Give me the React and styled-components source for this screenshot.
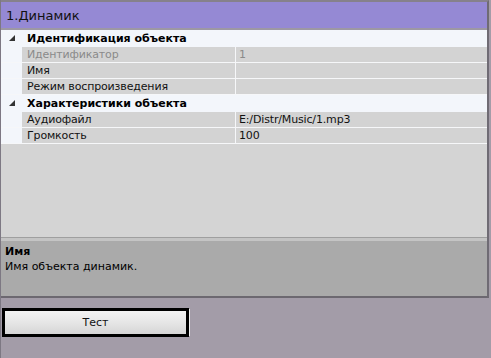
import React from 'react';
import styled, { createGlobalStyle } from 'styled-components';

const GlobalStyle = createGlobalStyle`
  html, body {
    margin: 0;
    padding: 0;
    background: #a39ca8;
    font-family: 'DejaVu Sans', Verdana, sans-serif;
  }
`;

const Page = styled.div`
  width: 491px;
  height: 358px;
  border-left: 1px solid #7d7883;
  box-sizing: border-box;
`;

const Panel = styled.div`
  width: 488px;
  height: 298px;
  box-sizing: border-box;
  border-top: 2px solid #86818b;
  border-right: 2px solid #6f6b74;
  border-bottom: 2px solid #6c6870;
  display: flex;
  flex-direction: column;
`;

const Header = styled.div`
  height: 26px;
  flex: none;
  background: #9589d4;
  border-bottom: 2px solid #9d98a4;
  display: flex;
  align-items: center;
  padding-left: 5px;
  font-size: 13px;
  color: #111;
`;

const Grid = styled.div`
  flex: 1;
  background: #d4d4d4;
  display: flex;
  flex-direction: column;
  font-size: 11px;
`;

const CategoryRow = styled.div`
  height: 16px;
  background: #f3f6fb;
  display: flex;
  align-items: center;
  font-weight: bold;
  color: #000;
  border-bottom: 1px solid #f3f6fb;
`;

const CategoryTitle = styled.span`
  padding-left: 5px;
`;

const Gutter = styled.div`
  width: 21px;
  flex: none;
  display: flex;
  justify-content: center;
  align-items: center;
  align-self: stretch;
  background: #f3f6fb;
`;

const Row = styled.div`
  height: 15px;
  display: flex;
  border-bottom: 1px solid #f6f7f9;
`;

const Cell = styled.div`
  background: #d3d3d3;
  display: flex;
  align-items: center;
  padding-left: 5px;
  color: ${(p) => (p.$muted ? '#8a8a8a' : '#111')};
  box-sizing: border-box;
  letter-spacing: -0.15px;
`;

const NameCell = styled(Cell)`
  width: 214px;
  flex: none;
  border-right: 1px solid #f6f7f9;
`;

const ValueCell = styled(Cell)`
  flex: 1;
  padding-left: 3px;
`;

const Splitter = styled.div`
  height: 4px;
  flex: none;
  border-top: 1px solid #9f9f9f;
  background: #c4c4c4;
  box-sizing: border-box;
`;

const Description = styled.div`
  height: 55px;
  flex: none;
  box-sizing: border-box;
  background: #aaaaaa;
  padding: 3px 4px;
  font-size: 11px;
  color: #000;
  line-height: 15px;
`;

const DescTitle = styled.div`
  font-weight: bold;
`;

const ButtonArea = styled.div`
  padding: 10px 0 0 1px;
`;

const TestButton = styled.button`
  width: 187px;
  height: 29px;
  border: 3px solid #000;
  background: linear-gradient(#f3f3f3, #e6e6e6 50%, #d6d6d6);
  font-family: 'DejaVu Sans', Verdana, sans-serif;
  font-size: 11px;
  color: #111;
  padding: 0;
  box-shadow: 2px 0 0 -1px #f0f0f0;
`;

const Arrow = () => (
  <svg width="6" height="6" viewBox="0 0 6 6">
    <polygon points="6,0 6,6 0,6" fill="#333" />
  </svg>
);

const groups = [
  {
    title: 'Идентификация объекта',
    rows: [
      { name: 'Идентификатор', value: '1', muted: true },
      { name: 'Имя', value: '' },
      { name: 'Режим воспроизведения', value: '' },
    ],
  },
  {
    title: 'Характеристики объекта',
    rows: [
      { name: 'Аудиофайл', value: 'E:/Distr/Music/1.mp3' },
      { name: 'Громкость', value: '100' },
    ],
  },
];

const App = () => {
  return (
    <Page>
      <GlobalStyle />
      <Panel>
        <Header>1.Динамик</Header>
        <Grid>
          {groups.map((g) => (
            <React.Fragment key={g.title}>
              <CategoryRow>
                <Gutter>
                  <Arrow />
                </Gutter>
                <CategoryTitle>{g.title}</CategoryTitle>
              </CategoryRow>
              {g.rows.map((r) => (
                <Row key={r.name}>
                  <Gutter />
                  <NameCell $muted={r.muted}>{r.name}</NameCell>
                  <ValueCell $muted={r.muted}>{r.value}</ValueCell>
                </Row>
              ))}
            </React.Fragment>
          ))}
        </Grid>
        <Splitter />
        <Description>
          <DescTitle>Имя</DescTitle>
          <div>Имя объекта динамик.</div>
        </Description>
      </Panel>
      <ButtonArea>
        <TestButton>Тест</TestButton>
      </ButtonArea>
    </Page>
  );
};

export default App;
